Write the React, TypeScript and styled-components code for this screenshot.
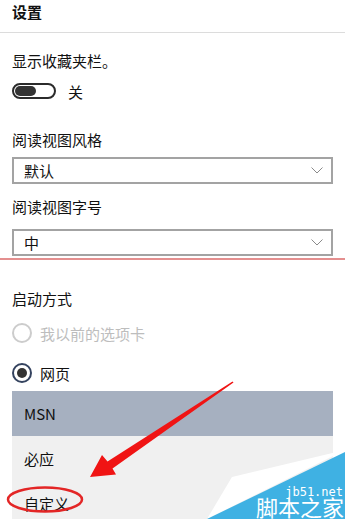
import React from "react"
import styled, { createGlobalStyle } from "styled-components"

const GlobalStyle = createGlobalStyle`
  body {
    margin: 0;
    background: #fff;
    font-family: "Noto Sans CJK SC", "Noto Sans", sans-serif;
    color: #111;
  }
`

const Page = styled.div`
  position: relative;
  width: 345px;
  height: 519px;
  overflow: hidden;
  background: #fff;
`

const Header = styled.div`
  height: 33px;
  padding: 2px 12px 0;
  box-sizing: border-box;
  border-bottom: 1px solid #dcdcdc;
  font-size: 15px;
  line-height: 20px;
  font-weight: 600;
`

const Body = styled.div`
  padding: 0 12px;
  display: flex;
  flex-direction: column;
`

const Label = styled.div<{ $top: number }>`
  margin-top: ${({ $top }) => $top}px;
  font-size: 15px;
  line-height: 20px;
`

const ToggleRow = styled.div`
  margin-top: 10px;
  height: 20px;
  display: flex;
  align-items: center;
  gap: 12px;
  font-size: 15px;
`

const Toggle = styled.div`
  width: 44px;
  height: 16px;
  box-sizing: border-box;
  border: 2px solid #2b2b2b;
  border-radius: 8px;
  padding: 1px;
`

const Knob = styled.div`
  width: 21px;
  height: 10px;
  border-radius: 5px;
  background: #333;
`

const Select = styled.div<{ $top: number }>`
  margin-top: ${({ $top }) => $top}px;
  height: 27px;
  box-sizing: border-box;
  border: 2px solid #a3a3a3;
  display: flex;
  align-items: center;
  justify-content: space-between;
  padding: 0 8px 0 10px;
  font-size: 15px;
`

const RedLine = styled.div`
  margin: 2px -12px 0;
  height: 2px;
  background: #e48f8f;
`

const RadioRow = styled.div<{ $top: number; $disabled?: boolean }>`
  margin-top: ${({ $top }) => $top}px;
  height: 20px;
  display: flex;
  align-items: center;
  gap: 8px;
  font-size: 15px;
  color: ${({ $disabled }) => ($disabled ? "#bdbdbd" : "#111")};
`

const Radio = styled.div<{ $checked?: boolean }>`
  width: 20px;
  height: 20px;
  box-sizing: border-box;
  border-radius: 50%;
  border: 2px solid ${({ $checked }) => ($checked ? "#34435f" : "#cccccc")};
  display: flex;
  align-items: center;
  justify-content: center;

  &::after {
    content: "";
    display: ${({ $checked }) => ($checked ? "block" : "none")};
    width: 10px;
    height: 10px;
    border-radius: 50%;
    background: #333;
  }
`

const List = styled.div`
  margin-top: 8px;
  display: flex;
  flex-direction: column;
`

const Option = styled.div<{ $active?: boolean }>`
  height: 45px;
  display: flex;
  align-items: center;
  padding-left: 12px;
  font-size: 15px;
  background: ${({ $active }) => ($active ? "#a6b0c0" : "#f0f0f0")};
`

const Overlay = styled.svg`
  position: absolute;
  left: 0;
  top: 0;
  pointer-events: none;
`

const Chevron = () => (
  <svg width="12" height="7" viewBox="0 0 12 7">
    <polyline points="0.5,0.5 6,6 11.5,0.5" fill="none" stroke="#8a8a8a" strokeWidth="1" />
  </svg>
)

export default function App() {
  return (
    <Page>
      <GlobalStyle />
      <Header>设置</Header>
      <Body>
        <Label $top={18}>显示收藏夹栏。</Label>
        <ToggleRow>
          <Toggle>
            <Knob />
          </Toggle>
          <span>关</span>
        </ToggleRow>
        <Label $top={29}>阅读视图风格</Label>
        <Select $top={7}>
          <span>默认</span>
          <Chevron />
        </Select>
        <Label $top={13}>阅读视图字号</Label>
        <Select $top={12}>
          <span>中</span>
          <Chevron />
        </Select>
        <RedLine />
        <Label $top={29}>启动方式</Label>
        <RadioRow $top={14} $disabled>
          <Radio />
          <span>我以前的选项卡</span>
        </RadioRow>
        <RadioRow $top={20}>
          <Radio $checked />
          <span>网页</span>
        </RadioRow>
        <List>
          <Option $active>MSN</Option>
          <Option>必应</Option>
          <Option>自定义</Option>
        </List>
      </Body>
      <Overlay width="345" height="519" viewBox="0 0 345 519">
        <polygon
          points="90,477 102,455 107.5,461.5 232.5,381.4 233.5,382.6 112.5,468.5 116,474.5"
          fill="#f01414"
        />
        <ellipse cx="45" cy="499.5" rx="37" ry="12" fill="none" stroke="#e32626" strokeWidth="2.5" />
        <polygon points="232,477 345,450 207,519" fill="#ffffff" />
        <polygon points="345,452 345,519 207,519" fill="#3fb1e3" />
        <text x="343" y="496" textAnchor="end" fill="#fff" fontSize="12" fontFamily="DejaVu Sans Mono, monospace">
          jb51.net
        </text>
        <text x="344" y="516" textAnchor="end" fill="#fff" fontSize="22" fontFamily="Noto Sans CJK SC, sans-serif">
          脚本之家
        </text>
      </Overlay>
    </Page>
  )
}
